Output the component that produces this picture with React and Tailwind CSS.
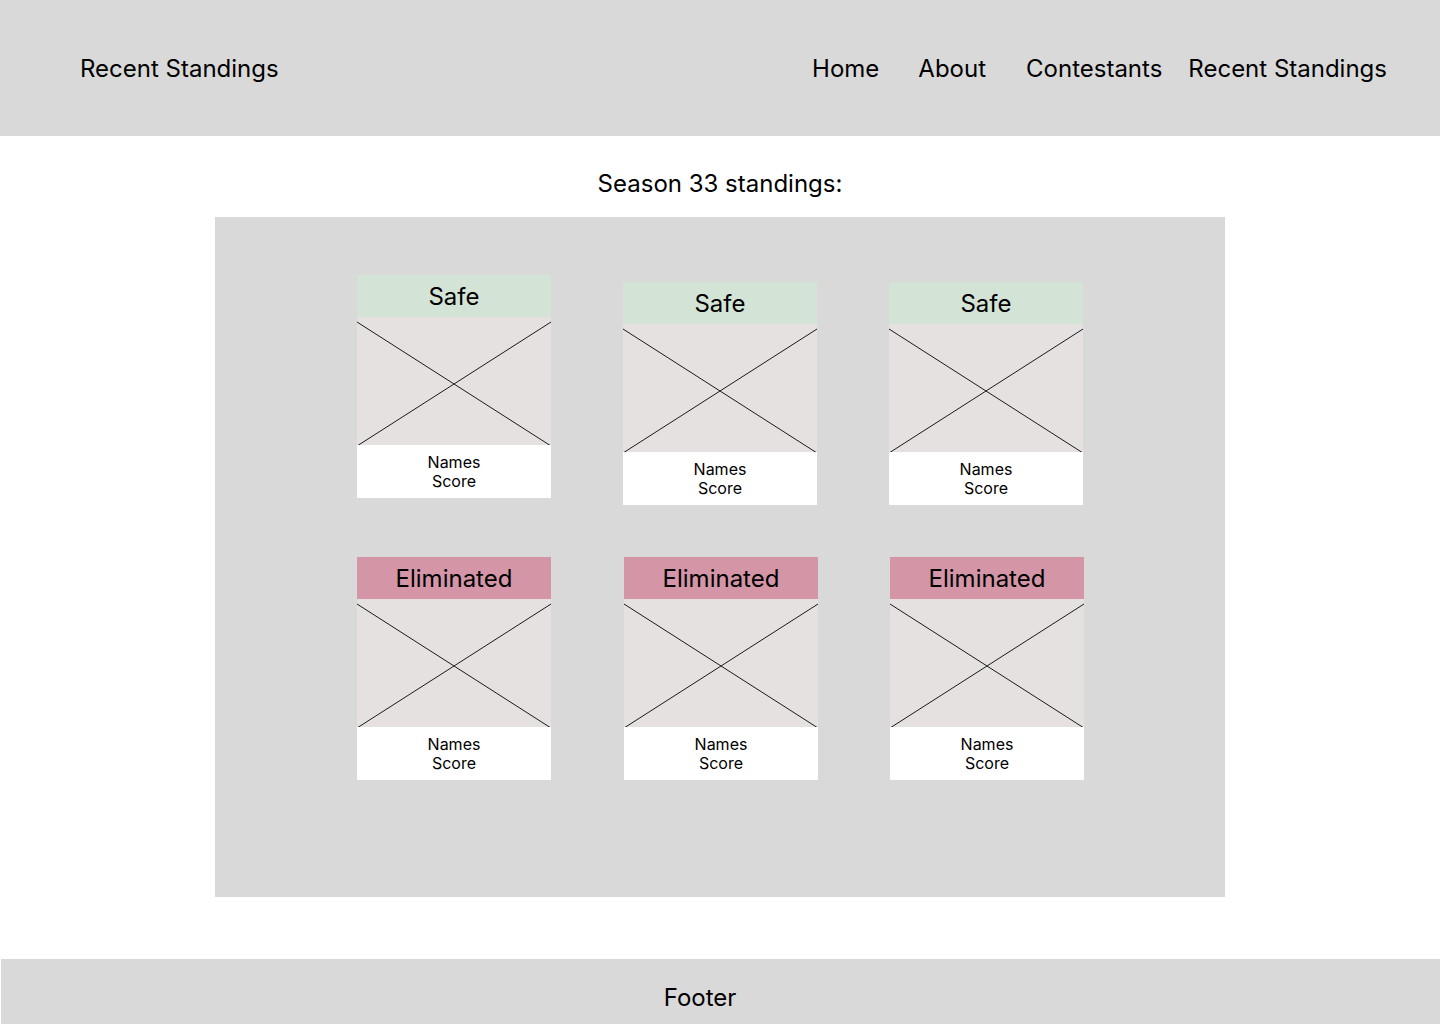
const CARDS_TOP = [
  { status: 'Safe', offset: 'mt-0' },
  { status: 'Safe', offset: 'mt-[7px]' },
  { status: 'Safe', offset: 'mt-[7px]' },
]

const CARDS_BOTTOM = [
  { status: 'Eliminated', offset: 'ml-0' },
  { status: 'Eliminated', offset: 'ml-[1px]' },
  { status: 'Eliminated', offset: 'ml-0' },
]

function Placeholder() {
  return (
    <div className="h-[128px] bg-[#e6e1e1]">
      <svg width="194" height="128" viewBox="0 0 194 128" className="block overflow-visible">
        <line x1="0" y1="5" x2="194" y2="129" stroke="#1a1a1a" strokeWidth="1" />
        <line x1="194" y1="5" x2="0" y2="129" stroke="#1a1a1a" strokeWidth="1" />
      </svg>
    </div>
  )
}

function Card({ status, className = '' }) {
  const safe = status === 'Safe'
  return (
    <div className={`w-[194px] flex flex-col ${className}`}>
      <div
        className={`h-[42px] flex items-center justify-center pt-[2px] text-[24px] text-black ${
          safe ? 'bg-[#d3e3d6]' : 'bg-[#d495a7]'
        }`}
      >
        {status}
      </div>
      <Placeholder />
      <div className="h-[53px] bg-white flex flex-col items-center justify-center text-[16px] leading-[19px] text-black">
        <span>Names</span>
        <span>Score</span>
      </div>
    </div>
  )
}

export default function App() {
  return (
    <div className="w-[1440px] min-h-[1024px] bg-white flex flex-col font-['Inter','Liberation_Sans',sans-serif] text-black">
      {/* Header */}
      <header className="h-[136px] bg-[#d9d9d9] flex items-center justify-between pl-[80px] pr-[53px]">
        <div className="text-[24px] leading-[29px]">Recent Standings</div>
        <nav className="flex items-center text-[24px] leading-[29px]">
          <a>Home</a>
          <a className="ml-[39px]">About</a>
          <a className="ml-[40px]">Contestants</a>
          <a className="ml-[26px]">Recent Standings</a>
        </nav>
      </header>

      {/* Main */}
      <main className="flex flex-col items-center pt-[33px]">
        <h1 className="text-[24px] leading-[29px]">Season 33 standings:</h1>
        <section className="mt-[19px] w-[1010px] h-[680px] bg-[#d9d9d9] pl-[142px] pt-[58px] flex flex-col gap-[52px]">
          <div className="flex items-start gap-[72px]">
            {CARDS_TOP.map((c, i) => (
              <Card key={i} status={c.status} className={c.offset} />
            ))}
          </div>
          <div className="flex items-start gap-[72px]">
            {CARDS_BOTTOM.map((c, i) => (
              <Card key={i} status={c.status} className={c.offset} />
            ))}
          </div>
        </section>
      </main>

      {/* Footer */}
      <footer className="mt-[62px] ml-[1px] h-[65px] bg-[#d9d9d9] flex items-center justify-center pt-[11px] pr-[41px] text-[24px] leading-[29px]">
        Footer
      </footer>
    </div>
  )
}
